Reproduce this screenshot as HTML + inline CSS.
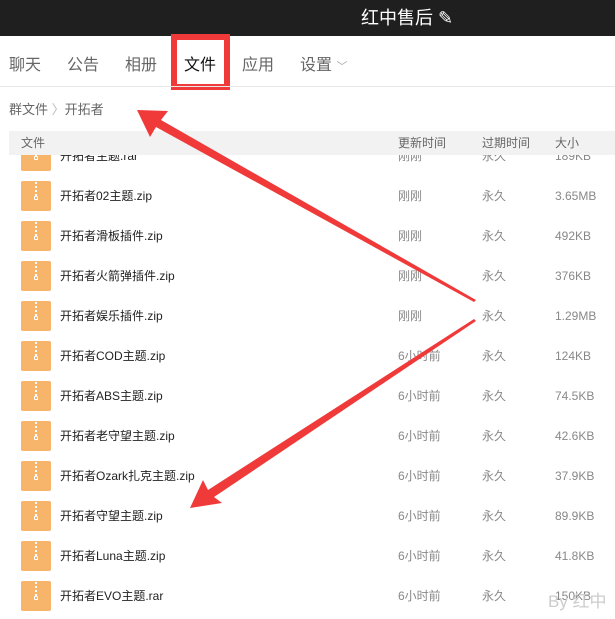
<!DOCTYPE html>
<html><head><meta charset="utf-8"><style>
body{margin:0;width:615px;height:619px;overflow:hidden;background:#fff;font-family:"Liberation Sans","Noto Sans CJK SC",sans-serif;position:relative}
div{line-height:16px}
.top{position:absolute;left:0;top:0;width:615px;height:36px;background:#1f1f1f;color:#fff;font-size:18px}
.top span{position:absolute;left:361px;top:8px;line-height:20px}
.tab{position:absolute;top:57px;font-size:16px;color:#666;line-height:18px}
.line{position:absolute;left:0;top:86px;width:615px;height:1px;background:#e8e8e8}
.bc{position:absolute;left:9px;top:102px;font-size:13px;color:#666}
.hdr{position:absolute;left:9px;top:131px;width:606px;height:24px;background:#f2f2f2;font-size:12px;color:#666;z-index:2}
.hdr span{position:absolute;top:5px;line-height:14px}
.row{position:absolute;left:0;width:615px;height:40px;font-size:12px}
.ic{position:absolute;left:21px;top:5px;width:30px;height:30px;background:#f6b56a;border-radius:2px}
.ic:after{content:"";position:absolute;left:14px;top:1px;width:2px;height:14px;background:repeating-linear-gradient(#fff 0 2px,transparent 2px 4px)}
.ic:before{content:"";position:absolute;left:13px;top:15px;width:2px;height:2px;border:1px solid #fff;border-radius:1px}
.n,.t,.e,.s{position:absolute;top:12px;line-height:16px}
.n{left:60px;color:#222}
.t{left:398px;color:#888}
.e{left:482px;color:#888}
.s{left:555px;color:#888}
</style></head><body>
<div class="top"><span>红中售后 ✎</span></div>
<div class="tab" style="left:9px">聊天</div>
<div class="tab" style="left:67px">公告</div>
<div class="tab" style="left:125px">相册</div>
<div class="tab" style="left:184px;color:#111">文件</div>
<div class="tab" style="left:242px">应用</div>
<div class="tab" style="left:300px">设置 <span style="font-size:11px;color:#aaa">﹀</span></div>
<div style="position:absolute;left:171px;top:34px;width:47px;height:44px;border:6px solid #f03a3a"></div>
<div class="line"></div>
<div class="bc">群文件 <span style="color:#bbb">〉</span>开拓者</div>
<div class="hdr"><span style="left:12px">文件</span><span style="left:389px">更新时间</span><span style="left:473px">过期时间</span><span style="left:546px">大小</span></div>
<div class="row" style="top:136px"><div class="ic"></div><div class="n">开拓者主题.rar</div><div class="t">刚刚</div><div class="e">永久</div><div class="s">189KB</div></div>
<div class="row" style="top:176px"><div class="ic"></div><div class="n">开拓者02主题.zip</div><div class="t">刚刚</div><div class="e">永久</div><div class="s">3.65MB</div></div>
<div class="row" style="top:216px"><div class="ic"></div><div class="n">开拓者滑板插件.zip</div><div class="t">刚刚</div><div class="e">永久</div><div class="s">492KB</div></div>
<div class="row" style="top:256px"><div class="ic"></div><div class="n">开拓者火箭弹插件.zip</div><div class="t">刚刚</div><div class="e">永久</div><div class="s">376KB</div></div>
<div class="row" style="top:296px"><div class="ic"></div><div class="n">开拓者娱乐插件.zip</div><div class="t">刚刚</div><div class="e">永久</div><div class="s">1.29MB</div></div>
<div class="row" style="top:336px"><div class="ic"></div><div class="n">开拓者COD主题.zip</div><div class="t">6小时前</div><div class="e">永久</div><div class="s">124KB</div></div>
<div class="row" style="top:376px"><div class="ic"></div><div class="n">开拓者ABS主题.zip</div><div class="t">6小时前</div><div class="e">永久</div><div class="s">74.5KB</div></div>
<div class="row" style="top:416px"><div class="ic"></div><div class="n">开拓者老守望主题.zip</div><div class="t">6小时前</div><div class="e">永久</div><div class="s">42.6KB</div></div>
<div class="row" style="top:456px"><div class="ic"></div><div class="n">开拓者Ozark扎克主题.zip</div><div class="t">6小时前</div><div class="e">永久</div><div class="s">37.9KB</div></div>
<div class="row" style="top:496px"><div class="ic"></div><div class="n">开拓者守望主题.zip</div><div class="t">6小时前</div><div class="e">永久</div><div class="s">89.9KB</div></div>
<div class="row" style="top:536px"><div class="ic"></div><div class="n">开拓者Luna主题.zip</div><div class="t">6小时前</div><div class="e">永久</div><div class="s">41.8KB</div></div>
<div class="row" style="top:576px"><div class="ic"></div><div class="n">开拓者EVO主题.rar</div><div class="t">6小时前</div><div class="e">永久</div><div class="s">150KB</div></div>
<div style="position:absolute;left:548px;top:592px;font-size:17px;line-height:20px;color:#ccc;z-index:4">By 红中</div>
<svg style="position:absolute;left:0;top:0;z-index:3" width="615" height="619">
<polygon fill="#f03a3a" points="137,110 168,111 161,120 476,300 474,302 156,127 150,137"/>
<polygon fill="#f03a3a" points="190,508 203,480 208,490 474,319 476,321 214,497 222,503"/>
</svg>
</body></html>
